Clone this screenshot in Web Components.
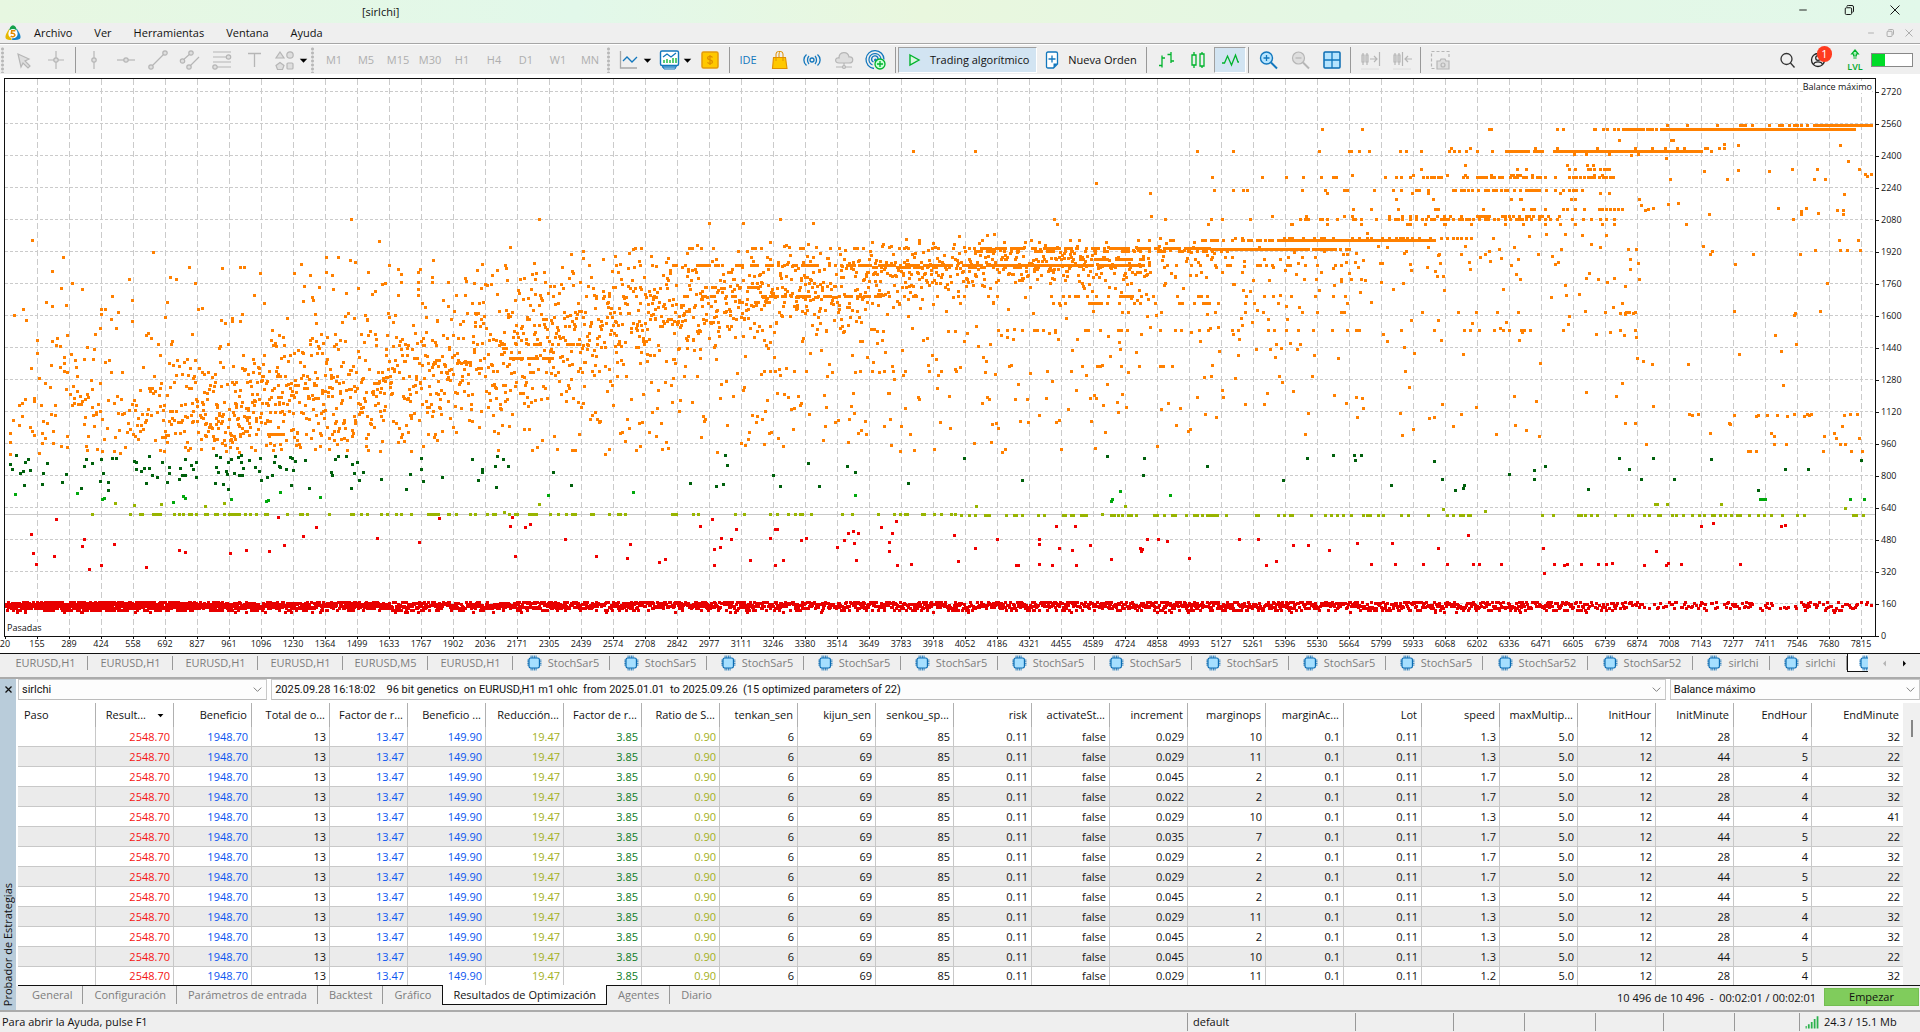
<!DOCTYPE html>
<html lang="es">
<head>
<meta charset="utf-8">
<title>[sirlchi]</title>
<style>
html, body { height: 100%; margin: 0; }
body { font: 11px/16px "Open Sans", "Noto Sans", "Liberation Sans", sans-serif; color: #111; background: #efefef; overflow: hidden; }
</style>
</head>
<body>
<trade-app></trade-app>
<script>
const BASE = `*{box-sizing:border-box} button,select,a{font:inherit;color:inherit} button{background:none;border:0;padding:0;margin:0} a{text-decoration:none}`;
function define(tag, html, setup) {
  const tpl = document.createElement('template');
  customElements.define(tag, class extends HTMLElement {
    connectedCallback() {
      if (this.shadowRoot) return;
      const root = this.attachShadow({ mode: 'open' });
      tpl.innerHTML = `<style>${BASE}</style>` + (typeof html === 'function' ? html(this) : html);
      root.append(tpl.content.cloneNode(true));
      if (setup) setup(root, this);
    }
  });
}

/* ---------- icons, all on a 24 unit grid ---------- */
const G = 'fill="none" stroke="#b6b6b6" stroke-width="1.2"';
const GF = 'fill="#dedede" stroke="#b6b6b6" stroke-width="1.2"';
const B = 'fill="none" stroke="#1277bd" stroke-width="1.3"';
const N = 'fill="none" stroke="#00b32c" stroke-width="1.3"';
const ICONS = {
  cursor: `<path ${GF} d="M6 6l11 5-4 2 5 5-2 2-5-5-2 4z"/>`,
  cross: `<path ${G} d="M12 3v18M4 12h16"/><circle ${GF} cx="12" cy="12" r="2.2"/>`,
  vline: `<path ${G} d="M12 3v18"/><circle ${GF} cx="12" cy="12" r="2.2"/>`,
  hline: `<path ${G} d="M3 12h18"/><circle ${GF} cx="12" cy="12" r="2.2"/>`,
  trend: `<path ${G} d="M5 19L19 5"/><circle ${GF} cx="5" cy="19" r="2.2"/><circle ${GF} cx="19" cy="5" r="2.2"/>`,
  channel: `<path ${G} d="M4 13l9-8M11 19L21 9"/><circle ${GF} cx="4.500" cy="13" r="2.200"/><circle ${GF} cx="13" cy="5" r="2.2"/><circle ${GF} cx="11" cy="19" r="2.2"/>`,
  fibo: `<path ${G} d="M3 4h18M3 9h14M3 14h18M6 19h15"/><circle ${GF} cx="18.500" cy="9" r="2.2"/><circle ${GF} cx="5" cy="19" r="2.2"/>`,
  text: `<path fill="none" stroke="#b6b6b6" stroke-width="1.3" d="M6 5.500h13M12.500 5.500V19"/>`,
  shapes: `<path ${GF} d="M7 4l4 6H3zM7 14.500l4 3-1.500 4h-5L3 17.500z"/><circle ${GF} cx="17" cy="7" r="3.200"/><rect ${GF} x="14" y="15" width="6" height="6" rx="1"/>`,
  linechart: `<path fill="none" stroke="#a8a8a8" stroke-width="1.3" d="M3.500 3v17H20"/><path ${B} d="M6 13l4-4 5 5 5-5"/>`,
  indicators: `<path fill="#d8ecf8" stroke="#1277bd" d="M5 17h15l-2 4H7z"/><rect x="3.500" y="3" width="18" height="14.500" rx="1.500" fill="#fff" stroke="#1277bd" stroke-width="1.400"/><path ${B} d="M6 9l4-3 4 3 5-4"/><path ${N} d="M7 12v3M10 11v4M13 12v3M16 10v5M19 10v5"/><path ${B} d="M5 19h14"/>`,
  dollar: `<rect x="4" y="4" width="16" height="16" rx="1.500" fill="#ffc800" stroke="#e39a0c" stroke-width="1.500"/><path fill="none" stroke="#df8f00" stroke-width="1.300" d="M14.500 9.500c-1-1.500-5-1.500-5 .6 0 2.200 5 1.400 5 3.800 0 2-4 2-5 .4M12 7v10"/>`,
  bag: `<path d="M5.500 9.500h12l1.500 11H4.500z" fill="#ffc800" stroke="#e09000" stroke-width="1.100"/><path fill="none" stroke="#e09000" stroke-width="1" d="M8 13V6q0-2.500 2.500-2.500h2Q15 3.500 15 6v7M11 9V6q0-2 1.500-2.500"/>`,
  signal: `<circle cx="12" cy="12" r="2" ${B}/><path ${B} d="M9 8c-2 2-2 6 0 8M6.500 6.500c-3.500 3-3.500 8 0 11M15 8c2 2 2 6 0 8M17.500 6.500c3.500 3 3.500 8 0 11"/>`,
  cloud: `<path ${GF} d="M7 15c-5 0-4-6 0-5 0-7 9-7 10-1 5-1 5 6 0 6z"/><path ${G} d="M4 19h16M12 15v3"/><circle ${GF} cx="12" cy="19" r="1.500"/>`,
  globe: `<path ${B} d="M10 20.500a9 9 0 1 1 10-9M8.500 17a6 6 0 1 1 8.500-5.500M9.500 14a3.200 3.200 0 1 1 4.500-2.500"/><circle cx="11.500" cy="12" r="1.500" fill="#1277bd"/><circle cx="16" cy="16" r="5" fill="#ccffd8" stroke="#00b32c" stroke-width="1.300"/><path ${N} d="M13 16h6M16 13v6"/>`,
  play: `<path fill="#d8f7df" stroke="#00b32c" stroke-width="1.400" d="M8 7l9 5-9 5z"/>`,
  order: `<path fill="#fff" stroke="#1277bd" stroke-width="1.300" d="M8 4h8q1.500 0 1.500 1.500V16l-4 4H8q-1.500 0-1.500-1.500v-13Q6.500 4 8 4z"/><path fill="#1277bd" d="M17.500 15.500h-4V20z"/><path ${B} d="M12 7.500v7M8.500 11h7"/>`,
  bars: `<path ${N} d="M8 7.500v12M5 17.500h3M8 10h3M17 4v11M13.500 6.500H17M17 13h3"/>`,
  candles: `<path ${N} d="M8 4v16M16 4v16"/><path fill="#efefef" stroke="#00b32c" stroke-width="1.300" d="M6 7h4v10H6zM14 6h4v12h-4z"/>`,
  zigzag: `<path ${N} d="M4 15h2.500l3-7 4 9 4-10 2.500 7h1"/>`,
  zoomin: `<path fill="none" stroke="#1277bd" stroke-width="2" d="M15 14.500l6 6"/><circle cx="10.500" cy="10" r="6" fill="#b5e4ff" stroke="#1277bd" stroke-width="1.400"/><path ${B} d="M7.500 10h6M10.500 7v6"/>`,
  zoomout: `<path fill="none" stroke="#b6b6b6" stroke-width="2" d="M15 14.500l6 6"/><circle ${GF} cx="10.500" cy="10" r="6"/><path ${G} d="M7.500 10h6"/>`,
  tiles: `<rect x="4" y="4" width="16" height="16" rx="1" fill="#b5e4ff" stroke="#0b6cb3" stroke-width="1.500"/><path ${B} d="M12 4v16M4 12h16"/>`,
  shiftend: `<path ${G} d="M5 5v12M9 5v12M21.500 4v14M12 11h7M16 8l3 3-3 3"/><path stroke="#dcdcdc" d="M3 21h18"/><path ${GF} d="M4 7h2v7H4zM8 7h2v7H8z"/>`,
  shiftin: `<path ${G} d="M5 5v12M9 5v12M12.500 4v14M15 11h7M18 8l-3 3 3 3"/><path stroke="#dcdcdc" d="M3 21h18"/><path ${GF} d="M4 7h2v7H4zM8 7h2v7H8z"/>`,
  camera: `<path ${G} stroke-dasharray="3 2" d="M21 9V3.500H3.500v17H7"/><path ${GF} d="M9 13h3l1-2h4l1 2h3v8H9z"/><circle ${G} cx="15" cy="17" r="2"/>`,
  search: `<circle cx="11.500" cy="11" r="5.500" fill="none" stroke="#333" stroke-width="1.300"/><path stroke="#333" stroke-width="1.300" d="M15.500 15l4 4.500"/>`,
  user: `<circle cx="11" cy="12" r="6.500" fill="none" stroke="#222" stroke-width="1.300"/><circle cx="11" cy="10" r="2.300" fill="none" stroke="#222" stroke-width="1.200"/><path fill="none" stroke="#222" stroke-width="1.200" d="M6.500 16.500c1-3.500 8-3.500 9 0"/>`,
  up: `<path fill="#b8f5c4" stroke="#00b32c" stroke-width="1.800" d="M12 3l5 6h-3v3h-4V9H7zM9.500 15h5"/>`,
  chip: `<path stroke="#0b6cb3" stroke-width="1" d="M8.500 3v18M10.500 3v18M12.500 3v18M14.500 3v18M4 8.500h17M4 10.500h17M4 12.500h17M4 14.500h17"/><rect x="6" y="6" width="12.500" height="12" rx="2" fill="#a5dfff" stroke="#0b6cb3" stroke-width="1.400"/>`,
  logo: `<path fill="#14a14b" d="M8 3Q12-2 16 3l2 5H6z"/><path fill="#e6b800" d="M6 6Q-2 18 2 21q4 2 8 1z"/><path fill="#1484c8" d="M18 6q8 12 4 15-4 2-12 1z"/><circle cx="12" cy="13" r="7" fill="#fff"/><path fill="none" stroke="#e08a00" stroke-width="2.200" d="M15.500 8.500H10l-.5 4c6-1 7 4.500 2.500 5q-2 .3-3.500-.8"/>`,
  min: `<path stroke="currentColor" stroke-width="1.200" d="M7 12h10"/>`,
  restore: `<path fill="none" stroke="currentColor" stroke-width="1.300" d="M9 7.500Q9 6 11 6h5q2 0 2 2v5.500q0 1.500-1.500 1.500"/><rect x="7" y="9" width="8.500" height="9" rx="1.500" fill="none" stroke="currentColor" stroke-width="1.300"/>`,
  close: `<path stroke="currentColor" stroke-width="1.300" d="M6 6l12 12M18 6L6 18"/>`,
  xbold: `<path stroke="currentColor" stroke-width="3.500" d="M4 4l16 16M20 4L4 20"/>`,
  caret: `<path fill="#000" d="M2 7h20L12 18z"/>`,
  chevron: `<path fill="none" stroke="#777" stroke-width="2.500" d="M2 7l10 10L22 7"/>`,
  left: `<path fill="#b4b4b4" d="M17 2v20L7 12z"/>`,
  right: `<path fill="#000" d="M7 2v20l10-10z"/>`,
  net: `<path fill="#2bb24c" d="M1 19h2v4H1zM5 16h3v7H5zM10 12h3v11h-3zM15 7h3v16h-3zM20 2h3v21h-3z"/>`
};
define('mt-icon', el => `<style>:host{display:block;flex:none;width:var(--s,24px);height:var(--s,24px)}svg{display:block;width:100%;height:100%}</style><svg viewBox="0 0 24 24" aria-hidden="true">${ICONS[el.getAttribute('name')]}</svg>`);

define('tool-button', el => `<style>
:host{display:block;height:26px}
button{width:32px;height:26px;display:flex;align-items:center;justify-content:center;color:#aeaeae}
:host([wide]) button{width:40px}
:host([label]) button{width:auto;justify-content:flex-start;padding:0 7px 0 3px;gap:4px;color:#111}
:host([blue]) button{color:#1277bd}
:host([on]) button{background:#d2e4f2;border:1px solid;border-color:#a0a0a0 #fff #fff #a0a0a0}
mt-icon[name=caret]{--s:9px;margin-left:2px}
</style><button aria-label="${el.getAttribute('icon') || ''}">${el.hasAttribute('icon') ? `<mt-icon name="${el.getAttribute('icon')}"></mt-icon>` : ''}<slot></slot>${el.hasAttribute('wide') ? '<mt-icon name="caret"></mt-icon>' : ''}</button>`);

define('title-bar', `<style>
:host{display:flex;height:23px;background:linear-gradient(90deg,#e7f7e1,#e2f8ea 30%,#e9f7de 48%,#e4f7e4 70%,#e2f8ea);align-items:center;padding:0 2px 0 362px}
h1{font:inherit;flex:1;margin:0}
button{width:46px;height:20px;display:grid;place-items:center;color:#111;align-self:flex-start} mt-icon{--s:18px}
</style><h1>[sirlchi]</h1><button aria-label="Minimizar"><mt-icon name="min"></mt-icon></button><button aria-label="Restaurar"><mt-icon name="restore"></mt-icon></button><button aria-label="Cerrar"><mt-icon name="close"></mt-icon></button>`);

define('menu-bar', `<style>
:host{display:flex;height:21px;align-items:center;border-bottom:1px solid #a6a6a6;padding:0 2px 0 5px}
nav{display:flex;flex:1;padding-left:2px} nav button{padding:0 11px;line-height:18px}
.w{width:19px;color:#999;display:grid;place-items:center} .w mt-icon{--s:14px} .l{--s:16px}
</style><mt-icon class="l" name="logo"></mt-icon><nav><button>Archivo</button><button>Ver</button><button>Herramientas</button><button>Ventana</button><button>Ayuda</button></nav>
<button class="w" aria-label="Minimizar"><mt-icon name="min"></mt-icon></button><button class="w" aria-label="Restaurar"><mt-icon name="restore"></mt-icon></button><button class="w" aria-label="Cerrar"><mt-icon name="close"></mt-icon></button>`);

const tb = (...n) => n.map(i => `<tool-button icon="${i}"></tool-button>`).join('');
define('tool-bar', `<style>
:host{display:flex;height:30px;align-items:center;border-top:1px solid #fff;padding:1px 7px 0 0}
i{width:8px;height:26px;flex:none;background:radial-gradient(circle,#b8b8b8 1px,transparent 2px) 0 0/5px 4px repeat-y}
hr{width:6px;height:26px;margin:0;border:0;flex:none;background:linear-gradient(#999,#999) center/1px 100% no-repeat}
.r{margin-left:auto;display:flex;align-items:center}
.badge{position:absolute;left:14px;top:-1px;width:15px;height:16px;border-radius:8px;background:#ff3b1f;color:#fff;line-height:16px;text-align:center}
.u{position:relative}
.lvl{display:flex;flex-direction:column;align-items:center;width:32px;margin-left:4px;color:#00a82a;font-size:9px;line-height:9px;font-weight:600}
.lvl mt-icon{--s:16px;margin:-2px 0 -2px}
progress{appearance:none;width:42px;height:14px;border:1px solid #888;background:#fff}
progress::-webkit-progress-bar{background:#fff} progress::-webkit-progress-value{background:#00dc28}
</style><i></i>${tb('cursor', 'cross')}<hr>${tb('vline', 'hline', 'trend', 'channel', 'fibo', 'text')}<tool-button icon="shapes" wide></tool-button><i></i>
${['M1', 'M5', 'M15', 'M30', 'H1', 'H4', 'D1', 'W1', 'MN'].map(t => `<tool-button>${t}</tool-button>`).join('')}<i></i>
<tool-button icon="linechart" wide></tool-button><tool-button icon="indicators" wide></tool-button>${tb('dollar')}<hr><tool-button blue>IDE</tool-button>${tb('bag', 'signal', 'cloud', 'globe')}<hr>
<tool-button icon="play" label on>Trading algorítmico</tool-button><tool-button icon="order" label>Nueva Orden</tool-button><hr>${tb('bars', 'candles')}<tool-button icon="zigzag" on></tool-button><hr>${tb('zoomin', 'zoomout', 'tiles')}<hr>${tb('shiftend', 'shiftin')}<hr>${tb('camera')}
<div class="r">${tb('search')}<div class="u"><tool-button icon="user"></tool-button><span class="badge">1</span></div><div class="lvl"><mt-icon name="up"></mt-icon>LVL</div><progress value="33" max="100" aria-label="Nivel"></progress></div>`);

/* ---------- optimisation scatter chart ---------- */
const X0 = 5, STEP = 32;
/* sparse passes, stored per half of the chart in that half's own units */
const HALF = {
  a: p => [p[0] * .6122, 130 + p[1] / 3],
  b: p => [960 + p[0] * .6122, 80 + p[1] / 2.8]
};
const parse = s => s.trim().split(/\s+/).map(t => t.split(',').map(Number));
const row = (y, s) => s.split(' ').map(x => [+x, y]);
const run = (y, x1, x2) => { const r = []; for (let x = x1; x <= x2; x += 3) r.push([x, y]); return r; };
const DARK = {
  a: parse(`16,1003 26,976 20,1018 33,1030 41,997 46,988 49,1021 38,1024 40,1066 68,1063 71,1030 77,1000 102,1057 107,1033 133,1075 141,988 138,1009 150,1000 165,988 163,1054 169,1030 177,1057 177,1081 183,985 190,985 219,994 222,997 222,1018 231,1024 235,1015 239,1060 244,979 244,1015 248,1036 257,1042 264,997 273,1057 276,1012 276,1030 293,1048 294,1015 297,1036 302,1036 302,988 312,1006 315,1018 320,997 320,1042 351,1060 353,976 353,1012 356,1027 360,982 365,1063 369,1024 371,1033 373,997 373,1078 378,988 382,1030 389,982 394,976 394,997 397,1015 391,1036 396,1036 407,991 417,1012 423,1024 424,985 427,1051 436,1042 445,1036 448,997 450,979 455,1009 458,1012 467,1018 473,982 477,985 476,1066 479,1021 482,994 498,991 505,1075 541,1027 543,1036 548,988 552,979 565,979 575,1003 583,997 574,1075 579,1030 587,1051 593,1027 623,1048 663,1078 670,1033 687,985 688,1018 691,1054 722,1042 771,988 781,1051 787,1018 787,1027 809,1009 812,979 821,988 830,1009 811,1072 904,1027 933,1066 1127,1060 1170,1069 1181,1063 1185,976 1188,1006 1263,1036 1274,1069 1320,1000 1338,1069 1384,1009 1397,1027 1483,1060`),
  b: parse(`7,1057 240,1054 301,1057 403,1082 299,1107 102,1121 567,1057 610,1051 644,1051 655,1051 646,1065 774,1068 788,1116 527,1121 704,1135 824,1135 822,1143 809,1149 897,1102 938,1093 938,1116 956,1082 1026,1144 1077,1057 1093,1090 1113,1116 1132,1057 1166,1116 1227,1060 1303,1149 1348,1090 1385,1090 1472,1063`)
};
const BRIGHT = {
  a: parse(`25,1093 126,1090 167,1108 170,1105 283,1117 299,1099 302,1105 378,1108 435,1114 438,1111 458,1087 523,1102 895,1096 1034,1087 1397,1096`),
  b: parse(`262,1152 246,1178 249,1174 343,1163 1307,1174 1311,1174 1315,1174 1454,1172 1477,1174`)
};
const OLIVE = {
  a: [...parse(`188,1120 219,1126 263,1123 335,1129 366,1120 881,1123 824,1147`), ...row(1153, '150 213 228 232 250 254 258 261 284 293 299 309 312 320 335 338 352 355 366 374 378 382 386 390 401 408 418 433 436 469 490 494 502 538 573 577 590 600 623 632 647 655 672 699 703 707 711 715 731 734 745 767 776 795 806 809 832 842 845 864 868 872 875 899 912 925 935 939 965 969 995 1009 1013 1021 1097 1100 1104 1132 1140 1200 1215 1257 1270 1287 1298 1306 1310 1325 1376 1391 1434 1461 1470 1478 1482 1506 1510 1526 1537 1554 1560')],
  b: [...parse(`26,1194 270,1194 789,1202 858,1208 232,1214 1135,1188 1138,1188 1155,1188 1243,1188 1446,1197`), ...row(1217, '2 15 25 41 45 48 75 88 91 101 127 137 168 171 181 184 197 201 205 246 252 258 264 274 280 288 317 321 333 347 351 369 383 387 395 404 408 412 416 420 435 483 487 520 529 539 542 573 597 606 615 626 638 659 664 669 683 691 720 731 764 795 806 817 821 829 833 950 968 1010 1014 1021 1031 1040 1070 1091 1097 1118 1126 1140 1144 1163 1169 1181 1195 1207 1216 1228 1232 1241 1250 1260 1269 1274 1289 1303 1314 1325 1343 1368 1379 1459 1464 1475')]
};
const RED = {
  a: parse(`92,1168 51,1213 138,1228 134,1249 187,1243 54,1270 89,1279 59,1303 146,1318 165,1306 239,1312 293,1261 303,1267 376,1270 402,1261 440,1264 464,1246 495,1219 454,1162 516,1192 616,1225 685,1237 717,1165 837,1162 833,1189 858,1192 866,1183 842,1279 923,1228 974,1279 1029,1243 1024,1285 1077,1297 1087,1288 1144,1189 1163,1168 1178,1225 1176,1252 1166,1258 1194,1228 1202,1198 1166,1306 1225,1291 1258,1225 1266,1198 1270,1198 1266,1306 1279,1291 1309,1231 1317,1225 1367,1252 1379,1231 1385,1210 1394,1204 1402,1210 1395,1240 1398,1291 1439,1192 1457,1210 1464,1174 1452,1237 1452,1264 1465,1306 1488,1303 1559,1216 1565,1294`),
  b: parse(`157,1250 188,1250 61,1284 129,1284 129,1298 25,1309 162,1309 183,1315 213,1301 247,1340 294,1309 298,1314 295,1320 306,1284 324,1284 338,1290 374,1337 91,1359 94,1359 129,1356 151,1359 190,1359 456,1284 487,1284 544,1301 569,1301 603,1315 516,1348 500,1359 649,1295 706,1295 672,1354 711,1354 757,1356 781,1309 830,1275 796,1354 838,1354 848,1354 884,1354 952,1309 954,1379 971,1356 987,1359 992,1354 1015,1356 1042,1354 1055,1354 1065,1351 1118,1359 1137,1318 1153,1359 1157,1351 1178,1354 1211,1250 1230,1239 1341,1250 1348,1247 1274,1356`)
};
const ORANGE = {
  a: parse(`1492,64 574,268 881,268 1158,280 1214,280 1274,268 1328,280 53,331 619,334 833,352 1480,328 1501,331 1566,319 85,424 118,460 134,478 183,499 107,526 38,538 23,556 43,571 193,547 182,568 164,595 216,574 110,616 61,631 61,670 242,610 246,625 281,634 273,517 288,448 319,460 330,535 314,613 399,412 425,430 481,430 415,496 432,520 396,553 379,565 379,574 392,574 533,427 544,478 497,469 495,514 512,511 601,427 636,406 650,418 655,433 683,427 629,460 655,457 683,457 683,478 708,391 706,442 706,457 731,457 788,403 825,406 873,400 856,445 889,427 775,460 785,475 812,493 936,430 953,364 985,388 1034,358 953,385 1064,379 1122,370 1220,364 1340,370 1351,385 1258,388 98,649 142,652 154,658 16,910 31,826 31,886 36,859 16,973 49,892 53,904 56,916 70,874 77,880 64,970 87,904 87,940 90,826 74,925 68,940 100,949 110,952 142,961 196,970 56,814 120,769 115,793 121,805 139,808 152,856 73,760 82,772 64,745 83,706 98,712 105,700 124,712 138,688 152,688 172,697 148,751 1210,940 989,973`),
  b: [
    ...row(136, '592 657 864 868 975 985 1035 1038 1051 1057 1068 1074 1122 1127 1131 1137'), ...run(136, 1083, 1118), ...run(136, 1145, 1460),
    ...row(127, '1155 1188 1237 1274 1278 1282 1294 1321 1338 1342 1354 1362 1368 1374 1384'), ...run(127, 1395, 1489), ...row(169, '1077 1161 1165'),
    ...row(200, '25 387 446 587 636 639 652 668 718 729 753 799 807 815 826 844 869 1226'), ...run(200, 892, 928), ...run(200, 938, 952), ...run(200, 970, 1000), ...run(200, 1004, 1212),
    ...row(189, '802 833 940 975 1040 1103 1131 1152 1172 1183 1217 1220 1240 1248'),
    ...row(272, '412 494 533 560 589 610 614 695 712 721 735 757 763 769 775 781 785 822 828 845 849 855 860 868 873 880 885 898 905 910 920 925 935 942 948 955 972 995 1001 1007 1012 1020 1025 1030 1036 1043 1050 1056 1062 1066'),
    ...row(265, '641 740 796 825 868 900 904 910 914 935 1035 1048'), ...row(250, '753 910 924 994 1005 1025 1029 1035 1045 1052 1056 1060'), ...row(239, '825 992 1024 1034'),
    ...row(309, '415 446 462 469 559 597 628 632 677 708 720 745 749 765 805 809 818 824 830 836 846 857 863 870 876 883 890 893 905 915 924 928 932 937 941 945 958 972 985 995 1001 1007 1016'),
    ...row(332, '773 712 900 914 917 998 1005'), ...row(316, '600 310 738 1045 1060 765 980'),
    ...row(360, '642 672 715 776 780 855 920 932 937 955 985 992 1005 1020 1043 1049 1055 1062 1069 1075 1081'),
    ...row(390, '154 335 410 428 474 555 564 568 588 592 600 615 642 646 655 680 700 710 716 722 735 745 755 762 770 775 785 789 793 797 806 815 820 826 832 838 848 857 863 872 878 890 899 908 913 918 925 932 945 955 963 975 1000 1018 1030 1045 1055 1068'),
    ...row(381, '312 510 565 628 640 700 722 735 745 765 779 790 800 818 845 850 855 860 864 885 890 897 903 913 925 930 936 946 951 960 978'),
    ...row(402, '159 405 540 543 600 655 730 735 760 790 793 835 890 920 955 980 1005 1048 1068 1186'),
    ...row(449, '36 116 180 195 290 308 343 348 395 400 410 415 420 430 445 460 463 470 475 485 490 499 505 510'), ...run(449, 520, 775),
    ...row(441, '327 450 460 530 537 543 560 578 590 595 610 640 652 665 672 690 700 712 718 724 730 738 750 768 785 795 806 812 818 826 835 870'),
    ...run(472, 410, 570), ...run(472, 576, 612), ...row(472, '620 630 635'),
    ...parse(`222,287 1003,208 1022,206 1060,208 1096,211 1108,208 1153,217 1248,178 1271,183 1438,183 1216,256 1271,253 1322,256 1160,276 1253,276 1359,248 1400,248 1395,276 1413,276 1451,228 1469,248 1479,262 1482,270 1488,262 1444,318 1109,332 1113,351 1119,365 1124,360 1132,357 1157,346 1173,343 1224,374 1336,357 1382,357 1361,388 1373,368 1374,376 1402,371 1433,365 1443,365 1443,376 1213,466 1225,486 1229,480 1296,486 1372,486 1397,477 1438,477 1449,477 1470,475 1467,447 1436,447 1091,472 1104,474 44,433 56,430 665,427 1016,435 1055,435 930,437 958,430 988,430 1264,648 1364,651 1405,648 1366,738 1341,760 1273,766 1189,796 1131,796 1116,788 1345,855 1132,914 1191,934 1206,934 1196,939 1264,939 1303,939 1300,941 1318,939 1335,939 1351,941 1363,936 1379,941 1383,936 1386,939 1390,936 1444,939 1453,936 1466,936 1256,959 1258,962 1441,970 1102,959 1087,959 1225,987 1325,987 1330,998 1428,987 1431,1001 1412,998 1469,1001 1330,1020 1349,1020 1438,1020 1446,1020 1121,1020 1287,1040 1291,1040 1300,1040 1410,1040 1456,1040 1474,1040 1082,623 1086,651 1100,651 1078,651 1085,715`)
  ]
};
/* dense cloud: [x, passes per px, centre y, spread, trailing passes per px] */
const CLOUD = [[5, .05, 400, 40, .05], [60, .3, 385, 42, .15], [130, .7, 405, 38, .3], [200, 1.7, 405, 34, .4], [300, 2.2, 395, 36, .4], [400, 1.7, 365, 38, .4], [500, 1.7, 345, 34, .5], [600, 1.7, 326, 30, .6], [700, 1.5, 304, 26, .7], [800, 1.4, 288, 22, .8], [900, 1.2, 276, 18, .7], [960, 1.1, 264, 12, .6], [1130, .9, 262, 11, .5], [1150, .4, 262, 13, .4], [1300, .25, 258, 16, .3], [1500, .2, 252, 18, .25], [1625, .2, 255, 22, .2], [1640, 0, 260, 22, .03], [1872, 0, 260, 20, .03]];
/* levels shared by many passes: [y, x from, x to, fill at start, fill at end] */
const LEVELS = [[248, 560, 960, .05, .25], [248, 960, 1210, .4, .9], [251, 960, 1236, .35, .3], [265, 580, 870, .1, .5], [265, 870, 960, .7, .9], [265, 960, 1140, .95, .9], [265, 1140, 1230, .6, .4], [265, 1230, 1350, .4, .25], [267, 870, 1100, .35, .2], [287, 640, 770, .1, .3], [296, 570, 770, .1, .3], [296, 770, 880, .7, .4], [296, 880, 1240, .2, .35], [296, 1240, 1350, .12, .08], [303, 960, 1280, .15, .2], [312, 960, 1640, .08, .12], [330, 980, 1320, .25, .2], [330, 1320, 1640, .16, .12], [366, 1055, 1180, .25, .15], [358, 510, 555, .8, .7], [344, 480, 620, .3, .3], [434, 268, 285, .8, .8], [259, 1080, 1145, .6, .5], [331, 700, 960, .08, .15], [371, 740, 960, .06, .12]];
const BAND = [[6, 3.4], [150, 3.2], [230, 2.4], [330, 1.9], [600, 1.6], [960, 1.4], [1300, 1.3], [1560, 1.1], [1640, .5], [1870, .55]];

function scatter() {
  let seed = 20250928;
  const rnd = () => { seed = (seed * 1664525 + 1013904223) >>> 0; return seed / 4294967296; };
  const gauss = () => rnd() + rnd() + rnd() + rnd() - 2;
  const at = (tab, x) => {
    let i = 1; while (i < tab.length - 1 && tab[i][0] < x) i++;
    const p = tab[i - 1], q = tab[i], t = (x - p[0]) / (q[0] - p[0]);
    return p.map((v, k) => v + (q[k] - v) * t);
  };
  const times = (n, f) => { for (; n > 0; n--) if (n >= 1 || rnd() < n) f(); };
  const path = (pts, color) => `<path fill="${color}" d="${pts.map(([x, y]) => `M${Math.round(x) - 1} ${Math.round(y) - 1}h3v3h-3z`).join('')}"/>`;
  const list = d => [...d.a.map(HALF.a), ...d.b.map(HALF.b)];
  const orange = list(ORANGE), band = [];
  for (let x = 7; x < 1872; x++) {
    const [, n, mu, sd, tail] = at(CLOUD, x);
    times(n, () => { const y = mu + gauss() * sd * 1.7; if (y < 453 && y > 240) orange.push([x, y]); });
    times(tail, () => orange.push([x, mu + (452 - mu) * Math.pow(rnd(), 1.3)]));
    if (x > 40 && x < 1100) times(.1, () => orange.push([x, mu - (mu - 250) * rnd()]));
    times(at(BAND, x)[1], () => {
      const r = rnd(); const y = r < .88 ? 602 + Math.floor(rnd() * 7) : r < .985 ? 610 : 612;
      band.push([x, y]);
    });
  }
  for (let x = 6; x < 240; x += 2) if (rnd() < .9) band.push([x, 604], [x, 606]);
  for (const [y, a, b, f1, f2] of LEVELS)
    for (let x = a; x < b; x += 3) if (rnd() < f1 + (f2 - f1) * (x - a) / (b - a)) orange.push([x, y]);
  return path(orange, '#ff8000') + path(list(DARK), '#00600c') + path(list(BRIGHT), '#00a80c') + path(list(OLIVE), '#98b400') + path(list(RED), '#f00000') + path(band, '#e80000');
}
const PASSES = '20 155 289 424 558 692 827 961 1096 1230 1364 1499 1633 1767 1902 2036 2171 2305 2439 2574 2708 2842 2977 3111 3246 3380 3514 3649 3783 3918 4052 4186 4321 4455 4589 4724 4858 4993 5127 5261 5396 5530 5664 5799 5933 6068 6202 6336 6471 6605 6739 6874 7008 7143 7277 7411 7546 7680 7815'.split(' ');
function gridLines() {
  let v = '', h = '';
  for (let i = 1; i < PASSES.length; i++) v += `M${X0 + .5 + STEP * i} 79V636`;
  for (let y = 91.5; y < 630; y += STEP) h += `M5 ${y}H1875`;
  return `<path d="${v}" stroke="#cbcbcb" stroke-dasharray="6 3"/><path d="${h}" stroke="#cbcbcb" stroke-dasharray="3 2"/><path d="M5 514.500H1875" stroke="#c8c8c8"/>`;
}
define('pass-chart', () => `<style>
:host{display:grid;grid-template-columns:1fr 44px;grid-template-rows:1fr 16px;min-height:0;background:#fff;font-size:9px;line-height:12px;border-bottom:1px solid #111;color:#111}
.plot{position:relative;margin:4px 0 0 4px;border:1px solid #111;min-height:0;overflow:hidden}
svg{display:block;width:100%;height:100%}
.t,.p{position:absolute;background:#fff}
.t{right:3px;top:2px}.p{left:2px;bottom:2px}
ol{list-style:none;margin:0;padding:0;display:flex}
.y{grid-column:2;grid-row:1/3;flex-direction:column;margin:2px 0 1px}
.y li{flex:1;display:flex;align-items:center;gap:2px}
.y li::before{content:"";width:3px;height:1px;background:#111}
.x{grid-column:1;grid-row:2;margin:0 -1px 0 -11px}
.x li{flex:1 1 0;min-width:0;display:flex;flex-direction:column;align-items:center;line-height:10px}
.x li::before{content:"";width:1px;height:2px;background:#111}
</style><div class="plot"><svg viewBox="5 79 1870 557" preserveAspectRatio="none" shape-rendering="crispEdges" role="img" aria-label="Balance máximo por pasada">${gridLines()}${scatter()}</svg><span class="t">Balance máximo</span><span class="p">Pasadas</span></div>
<ol class="y">${Array.from({ length: 18 }, (_, i) => `<li>${2720 - 160 * i}</li>`).join('')}</ol>
<ol class="x">${PASSES.map(p => `<li>${p}</li>`).join('')}</ol>`);

/* ---------- chart window tabs ---------- */
const WINDOWS = [...['H1', 'H1', 'H1', 'H1', 'M5', 'H1'].map(t => ['e', 'EURUSD,' + t]), ...Array(10).fill(['s', 'StochSar5']), ['m', 'StochSar52'], ['m', 'StochSar52'], ['i', 'sirlchi'], ['i', 'sirlchi']];
define('window-tabs', () => `<style>
:host{display:flex;height:25px;align-items:flex-start;border-bottom:2px solid #ababab;padding-left:3px;background:#efefef;color:#7d7d7d}
button{height:18px;line-height:18px;flex:none;display:flex;align-items:center;justify-content:center;gap:4px;background:linear-gradient(#999,#999) right center/1px 14px no-repeat;white-space:nowrap}
.e{width:85px}.s{width:97px}.m{width:105px}.i{width:77px}
mt-icon{--s:20px}
.on{width:21px;background:#fff;border:1px solid #111;border-width:0 0 1px 1px;overflow:hidden;justify-content:flex-start;padding-left:8px}
.arr{width:20px;background:none;margin-left:0}.arr mt-icon{--s:7px}.first{margin-left:6px}
</style>${WINDOWS.map(([c, t]) => `<button class="${c}">${c === 'e' ? '' : '<mt-icon name="chip"></mt-icon>'}${t}</button>`).join('')}<button class="on" aria-label="sirlchi"><mt-icon name="chip"></mt-icon></button><button class="arr first" aria-label="Anterior"><mt-icon name="left"></mt-icon></button><button class="arr" aria-label="Siguiente"><mt-icon name="right"></mt-icon></button>`);

/* ---------- strategy tester ---------- */
define('combo-box', el => `<style>
:host{display:grid;height:21px;border:1px solid #c9c9c9;border-bottom-color:#bbb;background:#fdfdfd;align-items:center;font-family:Roboto,"Liberation Sans",sans-serif}
select{grid-area:1/1;appearance:none;border:0;background:none;width:100%;height:19px;padding:0 20px 0 3px;color:#111;outline:0}
mt-icon{grid-area:1/1;--s:9px;justify-self:end;margin-right:4px;pointer-events:none}
</style><select aria-label="${el.getAttribute('label')}"><option>${el.getAttribute('value')}</option></select><mt-icon name="chevron"></mt-icon>`);

const HEAD = ['Paso', 'Result...', 'Beneficio', 'Total de o...', 'Factor de r...', 'Beneficio ...', 'Reducción...', 'Factor de r...', 'Ratio de S...', 'tenkan_sen', 'kijun_sen', 'senkou_sp...', 'risk', 'activateSt...', 'increment', 'marginops', 'marginAc...', 'Lot', 'speed', 'maxMultip...', 'InitHour', 'InitMinute', 'EndHour', 'EndMinute'];
const ROWS = ['0.029 10 1.3 28 4 32', '0.029 11 1.3 44 5 22', '0.045 2 1.7 28 4 32', '0.022 2 1.7 28 4 32', '0.029 10 1.3 44 4 41', '0.035 7 1.7 44 5 22', '0.029 2 1.7 28 4 32', '0.029 2 1.7 44 5 22', '0.045 2 1.3 44 5 22', '0.029 11 1.3 28 4 32', '0.045 2 1.3 28 4 32', '0.045 10 1.3 44 5 22', '0.029 11 1.2 28 4 32'].map(r => {
  const [inc, mo, sp, im, eh, em] = r.split(' ');
  return ['', '2548.70', '1948.70', '13', '13.47', '149.90', '19.47', '3.85', '0.90', '6', '69', '85', '0.11', 'false', inc, mo, '0.1', '0.11', sp, '5.0', '12', im, eh, em];
});
const TONE = { 1: 'r', 2: 'b', 4: 'b', 5: 'b', 6: 'o', 7: 'g', 8: 'o' };
define('results-table', () => `<style>
:host{display:flex;background:#fff;padding-top:3px;border-bottom:1px solid #111}
table{flex:1;min-width:0;border-collapse:separate;border-spacing:0;table-layout:fixed;width:100%}
col.first{width:4.138%}col.last{width:4.828%}
th,td{font-weight:400;text-align:right;padding:0 3px 0 0;white-space:nowrap;overflow:hidden;border-right:1px solid #c8c8c8;line-height:18px}
th{height:24px;padding-right:4px;border-color:#b0b0b0;color:#111}
th:first-child{text-align:left;padding-left:6px}
td{height:20px;border-bottom:1px solid #c8c8c8}
th:last-child,td:last-child{border-right:0}
tbody tr:nth-child(even){background:#ebebeb}
tbody tr:last-child td{border-bottom:0;height:18px}
.r{color:#f51414}.b{color:#0a55f0}.o{color:#a3b01c}.g{color:#0a7a24}
.sort span{display:flex;justify-content:flex-end;align-items:center;gap:11px;padding-right:5px}.sort mt-icon{--s:7px}
.bar{width:17px;background:#f0f0f0;padding-top:17px}.bar div{width:2px;height:17px;margin:0 auto;background:#868686}
</style><table><colgroup><col class="first"><col span="22"><col class="last"></colgroup><thead><tr>${HEAD.map((h, i) => i === 1 ? `<th class="sort"><span>${h}<mt-icon name="caret"></mt-icon></span></th>` : `<th>${h}</th>`).join('')}</tr></thead><tbody>${ROWS.map(r => `<tr>${r.map((c, i) => `<td class="${TONE[i] || ''}">${c}</td>`).join('')}</tr>`).join('')}</tbody></table><div class="bar"><div></div></div>`);

define('tester-footer', `<style>
:host{display:flex;height:24px;background:#efefef;color:#7d7d7d}
nav{display:flex;align-items:flex-start;padding-left:6px;flex:1;gap:1px}
button{height:18px;padding:0 10px;border-right:1px solid #999;line-height:16px}
nav .n{border-right:0}
nav .on{background:#fff;color:#111;border:1px solid #111;border-top:0;margin-top:-1px;height:20px;line-height:18px}
p{margin:4px 8px 0 0;color:#111;white-space:pre}
.go{background:#80cc5c;border:1px solid #74bd52;color:#111;width:95px;height:18px;margin:2px 1px 0 0}
</style><nav><button>General</button><button>Configuración</button><button>Parámetros de entrada</button><button>Backtest</button><button class="n">Gráfico</button><button class="on">Resultados de Optimización</button><button>Agentes</button><button class="n">Diario</button></nav><p>10 496 de 10 496  -  00:02:01 / 00:02:01</p><button class="go">Empezar</button>`);

define('strategy-tester', `<style>
:host{display:flex;background:#fff}
aside{width:16px;flex:none;background:#b9ccda;display:flex;flex-direction:column;justify-content:space-between;align-items:center;padding:5px 0 4px}
aside span{writing-mode:vertical-rl;transform:rotate(180deg);line-height:14px}
aside button{display:grid;place-items:center;width:14px;height:11px}aside mt-icon{--s:9px}
main{flex:1;min-width:0;display:flex;flex-direction:column;padding-left:2px}
.c{display:grid;grid-template-columns:249fr 1394fr 250fr;gap:4px;height:21px}
tester-footer{margin-left:-2px}
</style><aside><button aria-label="Cerrar"><mt-icon name="xbold"></mt-icon></button><span>Probador de Estrategias</span></aside>
<main><div class="c"><combo-box label="Experto" value="sirlchi"></combo-box><combo-box label="Optimización" value="2025.09.28 16:18:02&#160;&#160;&#160; 96 bit genetics&#160; on EURUSD,H1 m1 ohlc&#160; from 2025.01.01&#160; to 2025.09.26&#160; (15 optimized parameters of 22)"></combo-box><combo-box label="Criterio" value="Balance máximo"></combo-box></div><results-table></results-table><tester-footer></tester-footer></main>`);

define('status-bar', `<style>
:host{display:grid;grid-template-columns:1fr 168px 98px 71px 71px 68px 71px 65px 121px;height:22px;border-top:2px solid #ababab;background:#efefef}
div{border-left:1px solid #999;padding-left:5px;margin:1px 0;line-height:16px;display:flex;align-items:center;gap:5px}
div:first-of-type{border:0;padding-left:2px}mt-icon{--s:14px}
</style><div>Para abrir la Ayuda, pulse F1</div><div>default</div><div></div><div></div><div></div><div></div><div></div><div></div><div><mt-icon name="net"></mt-icon>24.3 / 15.1 Mb</div>`);

define('trade-app', `<style>:host{display:flex;flex-direction:column;height:100vh}pass-chart{flex:1}title-bar,menu-bar,tool-bar,window-tabs,strategy-tester,status-bar{flex:none}</style>
<title-bar></title-bar><menu-bar></menu-bar><tool-bar></tool-bar><pass-chart></pass-chart><window-tabs></window-tabs><strategy-tester></strategy-tester><status-bar></status-bar>`);
</script>
</body>
</html>
